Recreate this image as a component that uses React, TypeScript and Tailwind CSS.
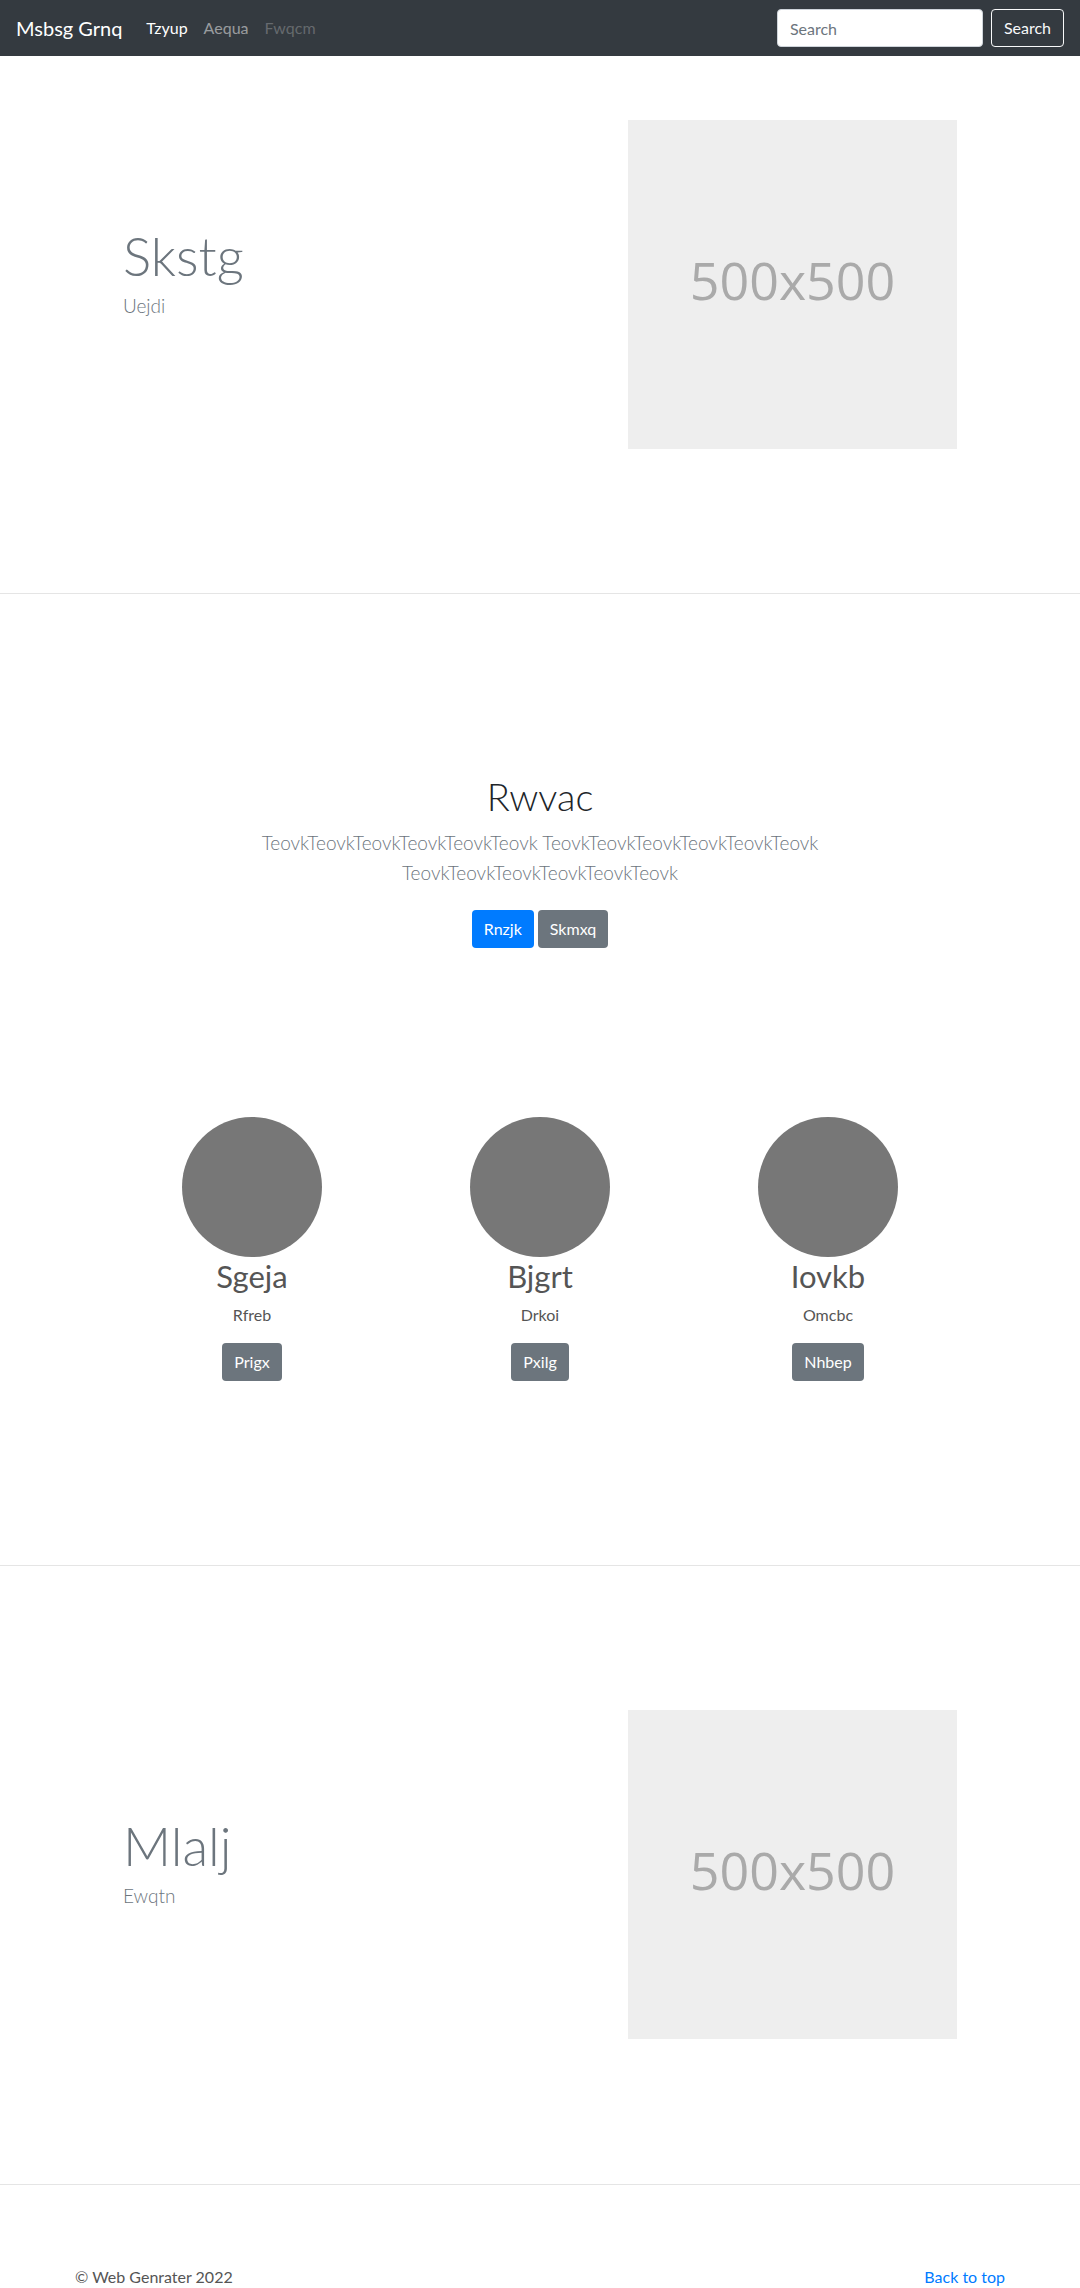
const people = [
  { name: "Sgeja", role: "Rfreb", action: "Prigx" },
  { name: "Bjgrt", role: "Drkoi", action: "Pxilg" },
  { name: "Iovkb", role: "Omcbc", action: "Nhbep" },
];

function Placeholder() {
  return (
    <div className="flex h-[329px] w-[329px] items-center justify-center bg-[#eeeeee]">
      <span className="mb-[10px] font-['Open_Sans',sans-serif] text-[52px] text-[#aaaaaa]">
        500x500
      </span>
    </div>
  );
}

function Feature({ title, sub }: { title: string; sub: string }) {
  return (
    <div className="mx-auto flex w-[864px] items-center">
      <div className="w-1/2 px-[15px]">
        <h1 className="mb-[2px] text-[53px] font-light leading-[67px] text-[#6c757d]">
          {title}
        </h1>
        <p className="mb-[26px] text-[19px] font-light leading-[30px] text-[#6c757d]">
          {sub}
        </p>
      </div>
      <div className="flex w-1/2 justify-end px-[15px]">
        <Placeholder />
      </div>
    </div>
  );
}

export default function App() {
  const word = "Teovk".repeat(6);

  return (
    <div className="min-h-screen bg-white font-['Lato',sans-serif] text-[16px] text-[#212529]">
      <nav className="flex h-[56px] items-center bg-[#343a40] px-4">
        <a className="mr-4 text-[20px] leading-[1.5] text-white">Msbsg Grnq</a>
        <a className="px-2 text-white">Tzyup</a>
        <a className="px-2 text-white/50">Aequa</a>
        <a className="px-2 text-white/25">Fwqcm</a>
        <div className="ml-auto flex items-center">
          <input
            placeholder="Search"
            className="h-[38px] w-[206px] rounded border border-[#ced4da] bg-white px-3 text-[16px] text-[#495057] placeholder:text-[#6c757d] outline-none"
          />
          <button className="ml-2 h-[38px] rounded border border-[#f8f9fa] px-3 text-[16px] text-[#f8f9fa]">
            Search
          </button>
        </div>
      </nav>

      <section className="border-b border-[#e5e5e5] pt-16 pb-[144px]">
        <Feature title="Skstg" sub="Uejdi" />
      </section>

      <section className="border-b border-[#e5e5e5] pt-[178px] pb-[184px]">
        <div className="text-center">
          <h1 className="mb-2 text-[38px] font-light leading-[48px] text-[#212529]">
            Rwvac
          </h1>
          <p className="mx-auto max-w-[600px] text-[19px] font-light leading-[30px] text-[#6c757d]">
            {word} {word} {word}
          </p>
          <div className="mt-[22px] flex justify-center gap-1">
            <button className="h-[38px] rounded bg-[#007bff] px-3 text-white">Rnzjk</button>
            <button className="h-[38px] rounded bg-[#6c757d] px-3 text-white">Skmxq</button>
          </div>
        </div>

        <div className="mx-auto mt-[169px] grid w-[864px] grid-cols-3">
          {people.map((p) => (
            <div key={p.name} className="flex flex-col items-center text-center">
              <div className="h-[140px] w-[140px] rounded-full bg-[#777777]" />
              <h2 className="mb-2 text-[31px] leading-[38px] text-[#555555]">{p.name}</h2>
              <p className="mb-4 leading-[24px] text-[#555555]">{p.role}</p>
              <button className="h-[38px] rounded bg-[#6c757d] px-3 text-white">
                {p.action}
              </button>
            </div>
          ))}
        </div>
      </section>

      <section className="border-b border-[#e5e5e5] pt-[144px] pb-[145px]">
        <Feature title="Mlalj" sub="Ewqtn" />
      </section>

      <footer className="pt-[80px] pb-12">
        <div className="mx-auto flex w-[930px] justify-between leading-[24px]">
          <p className="text-[#555555]">© Web Genrater 2022</p>
          <a className="text-[#007bff]">Back to top</a>
        </div>
      </footer>
    </div>
  );
}
